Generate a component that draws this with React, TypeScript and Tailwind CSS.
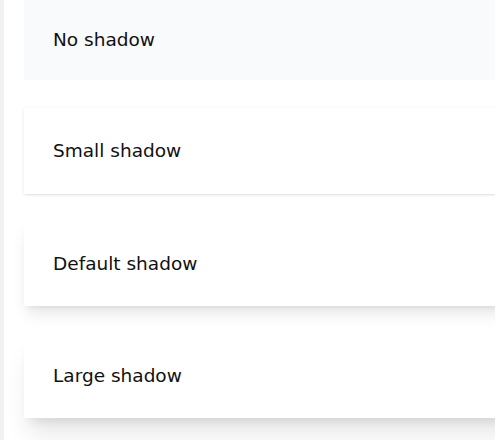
import React from "react";

const cards = [
  { label: "No shadow", className: "bg-gray-50 h-[80px]" },
  { label: "Small shadow", className: "bg-white shadow-sm h-[86px]" },
  { label: "Default shadow", className: "bg-white shadow-lg h-[84px]" },
  { label: "Large shadow", className: "bg-white shadow-xl h-[84px]" },
];

export default function App() {
  return (
    <div className="flex h-[440px] w-[495px] overflow-hidden bg-white font-['DejaVu_Sans',sans-serif]">
      <div className="w-[4px] shrink-0 bg-[#f1f1f1]" />
      <div className="flex flex-1 flex-col gap-[28px] pl-[20px]">
        {cards.map((c) => (
          <div
            key={c.label}
            className={`flex w-[500px] shrink-0 items-center pl-[29px] text-[18.5px] text-[#111] ${c.className}`}
          >
            {c.label}
          </div>
        ))}
      </div>
    </div>
  );
}
